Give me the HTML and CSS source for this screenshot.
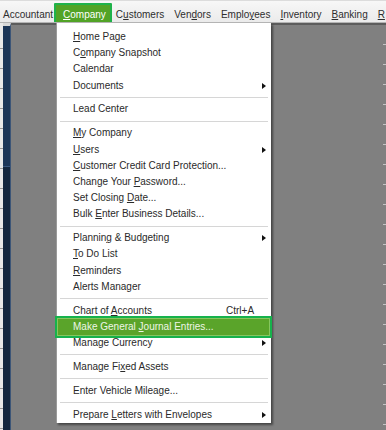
FILE: index.html
```html
<!DOCTYPE html>
<html>
<head>
<meta charset="utf-8">
<link rel="stylesheet" href="styles.css">
</head>
<body>
<div class="menubar">
  <span class="mb-item">Accountant</span>
  <span class="mb-item active"><span class="lbl"><u>C</u>ompany</span></span>
  <span class="mb-item">C<u>u</u>stomers</span>
  <span class="mb-item">Ven<u>d</u>ors</span>
  <span class="mb-item">Emplo<u>y</u>ees</span>
  <span class="mb-item"><u>I</u>nventory</span>
  <span class="mb-item"><u>B</u>anking</span>
  <span class="mb-item"><u>R</u></span>
</div>
<div class="workspace">
  <div class="left-strip"><div class="strip-light"></div><div class="strip-navy"><div class="navy-top"></div></div></div>
  <div class="gutter"></div>
  <div class="menu">
    <div class="item"><span class="label"><u>H</u>ome Page</span><span class="key"></span><span class="sub"></span></div>
    <div class="item"><span class="label">C<u>o</u>mpany Snapshot</span><span class="key"></span><span class="sub"></span></div>
    <div class="item"><span class="label">Calendar</span><span class="key"></span><span class="sub"></span></div>
    <div class="item"><span class="label">Documents</span><span class="key"></span><span class="sub"><i class="tri"></i></span></div>
    <div class="sep"></div>
    <div class="item"><span class="label">Lead Center</span><span class="key"></span><span class="sub"></span></div>
    <div class="sep"></div>
    <div class="item"><span class="label"><u>M</u>y Company</span><span class="key"></span><span class="sub"></span></div>
    <div class="item"><span class="label"><u>U</u>sers</span><span class="key"></span><span class="sub"><i class="tri"></i></span></div>
    <div class="item"><span class="label"><u>C</u>ustomer Credit Card Protection...</span><span class="key"></span><span class="sub"></span></div>
    <div class="item"><span class="label">Change Your <u>P</u>assword...</span><span class="key"></span><span class="sub"></span></div>
    <div class="item"><span class="label">Set Closing <u>D</u>ate...</span><span class="key"></span><span class="sub"></span></div>
    <div class="item"><span class="label">Bulk <u>E</u>nter Business Details...</span><span class="key"></span><span class="sub"></span></div>
    <div class="sep"></div>
    <div class="item"><span class="label">Plannin<u>g</u> &amp; Budgeting</span><span class="key"></span><span class="sub"><i class="tri"></i></span></div>
    <div class="item"><span class="label"><u>T</u>o Do List</span><span class="key"></span><span class="sub"></span></div>
    <div class="item"><span class="label"><u>R</u>eminders</span><span class="key"></span><span class="sub"></span></div>
    <div class="item"><span class="label">Alerts Manager</span><span class="key"></span><span class="sub"></span></div>
    <div class="sep"></div>
    <div class="item"><span class="label">Chart of <u>A</u>ccounts</span><span class="key">Ctrl+A</span><span class="sub"></span></div>
    <div class="item hl"><span class="label">Make General <u>J</u>ournal Entries...</span><span class="key"></span><span class="sub"></span></div>
    <div class="item"><span class="label">Manage Currency</span><span class="key"></span><span class="sub"><i class="tri"></i></span></div>
    <div class="sep"></div>
    <div class="item"><span class="label">Manage Fi<u>x</u>ed Assets</span><span class="key"></span><span class="sub"></span></div>
    <div class="sep"></div>
    <div class="item"><span class="label">Enter Vehicle Mileage...</span><span class="key"></span><span class="sub"></span></div>
    <div class="sep"></div>
    <div class="item"><span class="label">Prepare <u>L</u>etters with Envelopes</span><span class="key"></span><span class="sub"><i class="tri"></i></span></div>
  </div>
  <div class="main"></div>
  <div class="right-ticks"></div>
</div>
</body>
</html>
```

FILE: styles.css
```css
html, body {
  margin: 0;
  padding: 0;
}
body {
  width: 386px;
  height: 430px;
  overflow: hidden;
  background: #808080;
  font-family: "Liberation Sans", Arial, sans-serif;
  font-size: 10px;
  color: #2a2a2a;
}
u {
  text-decoration: underline;
  text-underline-offset: 1px;
}
.menubar {
  height: 23px;
  box-sizing: border-box;
  padding: 8px 0 0 3px;
  line-height: 12px;
  display: flex;
  gap: 10px;
  white-space: nowrap;
  overflow: hidden;
  background: linear-gradient(#f7f7f7, #ebebeb);
  border-top: 1px solid #dcdcdc;
  border-bottom: 1px solid #b4b4b4;
  color: #2e2e2e;
}
.mb-item {
  position: relative;
}
.mb-item.active .lbl {
  position: relative;
  z-index: 1;
  color: #ffffff;
}
.mb-item.active::before {
  content: "";
  position: absolute;
  left: -9px;
  right: -6px;
  top: -6px;
  bottom: -9px;
  background: #52a326;
  border: 2px solid #1fb24a;
  border-radius: 1px;
  box-sizing: border-box;
}
.workspace {
  display: flex;
  height: 407px;
}
.left-strip {
  width: 11px;
  display: flex;
  flex: none;
}
.strip-light {
  width: 3px;
  background: repeating-linear-gradient(#e9e9e9 0 19px, #9a9a9a 19px 20px);
  background-position: 0 6px;
}
.strip-navy {
  width: 7px;
  background: #14273f;
  border-right: 1px solid #3c5577;
  border-top: 3px solid #d8d8d8;
}
.navy-top {
  height: 140px;
  background: #1c3658;
  border-bottom: 1px solid #3a587e;
}
.gutter {
  width: 45px;
  flex: none;
  border-top: 2px solid #5c5c5c;
  background: #808080;
}
.menu {
  width: 215px;
  flex: none;
  align-self: flex-start;
  box-sizing: border-box;
  height: 400px;
  padding-top: 6px;
  background: #ffffff;
  border-left: 1px solid #9a9a9a;
  box-shadow: 2px 2px 2px rgba(0, 0, 0, 0.45);
  position: relative;
  z-index: 2;
}
.item {
  height: 16.2px;
  line-height: 16.2px;
  display: flex;
  padding: 0 5px 0 16px;
  white-space: nowrap;
  position: relative;
}
.label {
  flex: 1;
  position: relative;
  z-index: 1;
}
.key {
  width: 32px;
  position: relative;
  z-index: 1;
}
.sub {
  width: 8px;
  display: flex;
  align-items: center;
  justify-content: flex-end;
}
.tri {
  display: block;
  width: 0;
  height: 0;
  border-left: 4px solid #111;
  border-top: 3.5px solid transparent;
  border-bottom: 3.5px solid transparent;
}
.sep {
  height: 7.7px;
  display: flex;
  align-items: center;
  padding: 0 3px 0 3px;
}
.sep::before {
  content: "";
  flex: 1;
  height: 1px;
  background: #d6d6d6;
}
.item.hl .label {
  color: #eef6e6;
}
.item.hl::before {
  content: "";
  position: absolute;
  left: -2px;
  right: -1px;
  top: -2.3px;
  bottom: -3px;
  box-sizing: border-box;
  background: #5aa42a;
  border: 2px solid #16b24c;
  box-shadow: inset 0 0 0 1px #86c65e;
}
.main {
  flex: 1;
  border-top: 2px solid #5c5c5c;
  background: #808080;
}
.right-ticks {
  width: 3px;
  flex: none;
  border-top: 2px solid #5c5c5c;
  background: repeating-linear-gradient(#808080 0 19px, #c4c4c4 19px 20px);
}
```
